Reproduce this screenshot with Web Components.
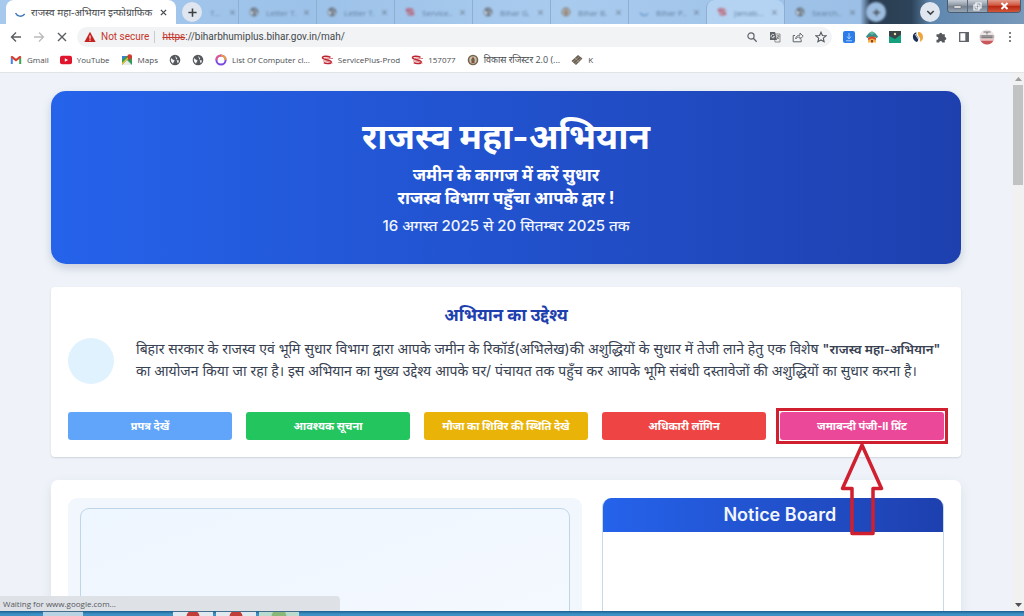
<!DOCTYPE html>
<html lang="hi">
<head>
<meta charset="utf-8">
<title>राजस्व महा-अभियान इन्फोग्राफिक</title>
<style>
html,body{margin:0;height:100%;overflow:hidden}
body{font-family:"Inter","Noto Sans Devanagari","Noto Sans",sans-serif}
browser-window{height:100vh}
purpose-card b{font-size:13px;font-weight:600}
</style>
</head>
<body>
<browser-window>
  <tab-strip slot="chrome"></tab-strip>
  <tool-bar slot="chrome"></tool-bar>
  <bookmarks-bar slot="chrome"></bookmarks-bar>
  <hero-banner>
    <span slot="title">राजस्व महा-अभियान</span>
    <span slot="line1">जमीन के कागज में करें सुधार</span>
    <span slot="line2">राजस्व विभाग पहुँचा आपके द्वार !</span>
    <span slot="date">16 अगस्त 2025 से 20 सितम्बर 2025 तक</span>
  </hero-banner>
  <purpose-card heading="अभियान का उद्देश्य">
    <span slot="text">बिहार सरकार के राजस्व एवं भूमि सुधार विभाग द्वारा आपके जमीन के रिकॉर्ड(अभिलेख)की अशुद्धियों के सुधार में तेजी लाने हेतु एक विशेष <b>"राजस्व महा-अभियान"</b> का आयोजन किया जा रहा है। इस अभियान का मुख्य उद्देश्य आपके घर/ पंचायत तक पहुँच कर आपके भूमि संबंधी दस्तावेजों की अशुद्धियों का सुधार करना है।</span>
    <action-button style="--bg:#60a5fa">प्रपत्र देखें</action-button>
    <action-button style="--bg:#22c55e">आवश्यक सूचना</action-button>
    <action-button style="--bg:#eab308">मौजा का शिविर की स्थिति देखे</action-button>
    <action-button style="--bg:#ef4444">अधिकारी लॉगिन</action-button>
    <action-button style="--bg:#ec4899" marked>जमाबन्दी पंजी-II प्रिंट</action-button>
  </purpose-card>
  <board-card><span slot="title">Notice Board</span></board-card>
  <span slot="status">Waiting for www.google.com...</span>
</browser-window>

<script>
function define(name, html, setup) {
  const tpl = document.createElement('template');
  tpl.innerHTML = html;
  customElements.define(name, class extends HTMLElement {
    constructor() {
      super();
      this.attachShadow({mode: 'open'}).append(tpl.content.cloneNode(true));
    }
    connectedCallback() { if (setup) setup(this, this.shadowRoot); }
  });
}
const UI = `font-family:"Open Sans","Noto Sans Devanagari","Noto Sans",sans-serif;`;
const BASE = `*{box-sizing:border-box}button{font:inherit;border:0;padding:0;margin:0;background:none;color:inherit;cursor:pointer}svg{display:block}`;

const ICONS = {
  back: ['0 0 12 12', '<path d="M11 6H2M6 1.5 1.5 6 6 10.5" fill="none" stroke="#5a5d61" stroke-width="1.4"/>'],
  forward: ['0 0 12 12', '<path d="M1 6h9M6 1.5 10.5 6 6 10.5" fill="none" stroke="#b9bbbe" stroke-width="1.3"/>'],
  stop: ['0 0 12 12', '<path d="m2 2 8 8M10 2 2 10" stroke="#5a5d61" stroke-width="1.4"/>'],
  warn: ['0 0 12 12', '<path d="M6 .8 11.6 11H.4z" fill="#c5221f"/><path d="M6 4.5v3.2M6 8.6v1.2" stroke="#fff" stroke-width="1.1"/>'],
  search: ['0 0 12 12', '<circle cx="5" cy="5" r="3.1" fill="none" stroke="#5f6368" stroke-width="1.2"/><path d="m7.3 7.3 3.4 3.4" stroke="#5f6368" stroke-width="1.3"/>'],
  translate: ['0 0 12 12', '<path d="M5 3h6v8H6z" fill="#eee" stroke="#777" stroke-width=".8"/><path d="M1 1h5l2 8H1z" fill="#5f6368"/><path d="M5.2 4A1.7 1.7 0 1 0 5.5 5.5H4" fill="none" stroke="#eee" stroke-width=".8"/><path d="M7.5 5h3M9 4v1M10 5 8.3 8M8 6l2 2" stroke="#666" stroke-width=".7" fill="none"/>'],
  share: ['0 0 12 12', '<path d="M3 4.5H1.2v6.3h8V8.5" fill="none" stroke="#5f6368"/><path d="M3.6 8C4 5.3 5.5 4.2 8 4.2V2l3.2 3.2L8 8.2V6C6 6 4.7 6.5 3.6 8z" fill="none" stroke="#5f6368" stroke-width=".9"/>'],
  star: ['0 0 12 12', '<path d="m6 1.2 1.4 3.3 3.6.3-2.7 2.4.8 3.5L6 8.9l-3.1 1.8.8-3.5L1 4.8l3.6-.3z" fill="none" stroke="#55585c" stroke-width="1.1"/>'],
  download: ['0 0 12 12', '<rect width="12" height="12" rx="2" fill="#2b7de9"/><path d="M6 2v5.5M4 5.5 6 8l2-2.5M3 9.8h6" fill="none" stroke="#a9ceff"/>'],
  house: ['0 0 12 12', '<path d="M0 5.5 3 2l3-1.5L9 2l3 3.5-1 1.5H1z" fill="#3a8f86"/><path d="m3 2 3 2 3-2-3-1.5z" fill="#62b5a5"/><path d="M2 6h8v5.5H2z" fill="#f0b44c"/><path d="m2 7 4-2 4 2v2L6 7.5 2 9z" fill="#d94a34"/><path d="M5 9h2v2.5H5z" fill="#9c3a2c"/>'],
  photo: ['0 0 12 12', '<path d="M0 0h12v12H0z" fill="#16a17e"/><path d="M0 0h12v3.5L6 8 0 5z" fill="#3a4447"/><circle cx="6" cy="3" r="1.2" fill="#eee4b0"/>'],
  swirl: ['0 0 12 12', '<path d="M4.5 1.2A5 5 0 0 0 1 7c.5 2 2 3.5 4 4 2-2 2-4 .5-5.5S4 2.5 4.5 1.2z" fill="#1e2f55"/><path d="M6 1c3 0 5 2 5 5s-1.500 4.200-3 5C8.500 8.500 8 7 7 5.500S5.500 2.500 6 1z" fill="#eea53a"/><path d="m3 3 4 6" stroke="#fff" stroke-width=".8"/>'],
  puzzle: ['0 0 12 12', '<path d="M1.5 3.2h2.7a1.5 1.5 0 1 1 3 0h2.6v2.7a1.5 1.5 0 1 1 0 3v2.6H7.2a1.5 1.5 0 1 0-3 0H1.5V8.7a1.5 1.5 0 1 0 0-2.9z" fill="#55585c"/>'],
  panel: ['0 0 12 12', '<path d="M1.7 1.7h8.6v8.6H1.7z" fill="#fff" stroke="#5f6368" stroke-width="1.3"/><path d="M7.3 1.7h3v8.6h-3z" fill="#5f6368"/>'],
  avatar: ['0 0 16 16', '<circle cx="8" cy="8" r="7.5" fill="#ece6e6"/><path d="M1.5 11.5h13A7.5 7.5 0 0 1 8 15.5a7.5 7.5 0 0 1-6.5-4z" fill="#c9585d"/><path d="M.8 6h14.4v3.5H.8z" fill="#bdb6b8"/><path d="M4.5 3h7M8 3v2.5M2.5 7h11M2.5 8.7h11" stroke="#6c6769" stroke-width=".9"/><path d="M1 10.8h14" stroke="#f2b8ba" stroke-width="1.2"/>'],
  dots: ['0 0 12 12', '<g fill="#5f6368"><circle cx="6" cy="2" r="1.1"/><circle cx="6" cy="6" r="1.1"/><circle cx="6" cy="10" r="1.1"/></g>'],
  gmail: ['0 0 12 12', '<path d="M.8 10V3.2l2 1.5V10z" fill="#4285f4"/><path d="M9.2 10V4.7l2-1.5V10z" fill="#34a853"/><path d="M.8 3.4C.8 2 2 1.6 2.8 2.2L6 4.7l3.2-2.5c.8-.6 2-.2 2 1.2L6 7.5z" fill="#d93a30"/>'],
  youtube: ['0 0 12 12', '<rect y="1.8" width="12" height="8.4" rx="2" fill="#e0142c"/><path d="m4.8 4.2 3.2 1.8-3.2 1.8z" fill="#fff"/>'],
  maps: ['0 0 12 12', '<path d="M1 2h10v9H1z" fill="#2f9e58"/><path d="m1 11 5-5 5 5z" fill="#e9eaec"/><path d="M1 2h4L1 6z" fill="#3f7de0"/><path d="M1 9 8 2h2L1 11z" fill="#f3c231"/><path d="M8.7.3a2.4 2.4 0 0 1 2.4 2.4c0 1.5-1.5 2.3-2.4 4-.9-1.7-2.4-2.5-2.4-4A2.4 2.4 0 0 1 8.7.3z" fill="#d4392e"/>'],
  globe: ['0 0 12 12', '<circle cx="6" cy="6" r="5.3" fill="#55585c"/><path d="M2 4.2c1.3 0 1.2 1.3 2.3 1.5S6 6.8 5 7.7 4.5 10 3.6 9.3C2 8 1.4 6 2 4.2zM6 1.8c1 .2.3 1.5 1.4 1.6S8.5 5 7.5 5.4s.7 1.2 1.7.9S10 8.5 8.7 9.3" fill="#f4f4f4"/>'],
  ring: ['0 0 12 12', '<circle cx="6" cy="6" r="4.6" fill="none" stroke="#7a4be0" stroke-width="2"/><path d="M1.4 6A4.6 4.6 0 0 1 6 1.4" fill="none" stroke="#e15a8e" stroke-width="2"/><path d="M6 1.4A4.6 4.6 0 0 1 10.6 6" fill="none" stroke="#ee9a3e" stroke-width="2"/>'],
  splus: ['0 0 12 12', '<path d="M9.5 3.2C6 1.8 1.5 2 1.5 3.8S9.8 5.7 10.2 7.8 5 10 2.8 8.7" fill="none" stroke="#bd2430" stroke-width="1.5"/><path d="M4 4.2c2-.5 5 .5 8 .3M2 7c3-.5 5 .5 9.5 2.2" fill="none" stroke="#d0525b" stroke-width=".8"/>'],
  emblem: ['0 0 12 12', '<circle cx="6" cy="6" r="5.3" fill="#77664f"/><circle cx="6" cy="6" r="3.7" fill="#c9c4ae"/><path d="M4.5 9V5L6 2.7 7.5 5v4z" fill="#8b4a3a"/><path d="M4 6h4" stroke="#5d7a5b"/>'],
  stack: ['0 0 12 12', '<path d="m.5 7 6.5-6 4.5 3.5-6.5 6.5z" fill="#665c51"/><path d="m2 8 6.5-5.5M4 9.5 10.5 4M4 4l4.5 4" stroke="#b5aa98" stroke-width=".7"/>'],
  spinner: ['0 0 12 12', '<path d="M1.5 7C3 10.5 8 11.5 10.7 8" fill="none" stroke="#3f78b8" stroke-width="1.4"/>'],
  close: ['0 0 12 12', '<path d="m2.5 2.5 7 7M9.5 2.5l-7 7" stroke="#45484c" stroke-width="1.7"/>'],
  plus: ['0 0 12 12', '<path d="M6 1.5v9M1.5 6h9" stroke="#3c4043" stroke-width="1.7"/>'],
  chevron: ['0 0 12 12', '<path d="m2.5 4.3 3.5 3.5 3.5-3.5" fill="none" stroke="#3c4043" stroke-width="1.7"/>']
};
class UiIcon extends HTMLElement {
  static observedAttributes = ['name'];
  constructor() {
    super();
    this.attachShadow({mode: 'open'}).innerHTML = `<style>:host{display:block;flex:none;width:var(--size,12px);height:var(--size,12px)}svg{display:block;width:100%;height:100%}</style><svg aria-hidden="true"></svg>`;
  }
  attributeChangedCallback(attr, old, name) {
    const icon = ICONS[name];
    if (!icon) return;
    const svg = this.shadowRoot.querySelector('svg');
    svg.setAttribute('viewBox', icon[0]);
    svg.innerHTML = icon[1];
  }
}
customElements.define('ui-icon', UiIcon);

define('background-tab', `<style>${BASE}
:host{flex:1 1 0;min-width:0;max-width:78px;display:flex;align-items:center;height:24px;padding:0 6px 0 10px;gap:7px;border-left:1px solid #8fafd2;color:#4c6583;font-size:8px;white-space:nowrap}
:host([lit]){background:#b4d3f3;border-radius:8px 8px 0 0}
span,ui-icon{filter:blur(1px);opacity:.75}
span{flex:1;overflow:hidden}
</style><ui-icon id="icon" style="--size:10px"></ui-icon><span><slot></slot></span><ui-icon name="close" style="--size:7px"></ui-icon>`,
  (el, root) => root.querySelector('#icon').setAttribute('name', el.getAttribute('icon')));

define('tab-strip', `<style>${BASE}
:host{${UI}display:flex;align-items:center;height:24px;padding:0 3px 0 6px;background:linear-gradient(90deg,#a6c9ed 0,#9dc2e9 30%,#a9cbee 55%,#9bbfe6 84%,#2b3d52 85%,#2d4359 89%,#5f87ae 91%,#7899ba 100%)}
.active{display:flex;align-items:center;width:170px;height:24px;padding:0 8px;background:#fff;border-radius:8px 8px 0 0;font-size:10px;line-height:16px;color:#45484c;gap:5px}
.active span{flex:1;white-space:nowrap}
.round{display:grid;place-items:center;width:20px;height:20px;border-radius:50%;background:#dfe6ef;flex:none}
.new{margin:0 0 0 6px}
.tabs{flex:0 1 660px;min-width:0;display:flex;height:24px}
.stub{flex:0 0 36px;display:flex;align-items:center;gap:8px;padding-left:8px;color:#4c6583;font-size:8px;filter:blur(1px);opacity:.7}
.ghost{background:#9dbde0;filter:blur(1px);margin-left:4px}
.space{flex:1}
.win{display:flex;align-self:flex-start;height:13px;margin-left:7px;border:1px solid #4b5c70;border-top:0;border-radius:0 0 4px 4px;overflow:hidden;flex:none}
.win button{width:20px;height:12px;display:grid;place-items:center;background:linear-gradient(#c7ced6,#8d98a5 45%,#747f8d 50%,#96a5b4);border-right:1px solid #5b6877}
.win button:last-child{width:32px;border:0;background:linear-gradient(#e39c8c,#cf553e 45%,#b8240f 50%,#d2563a)}
</style>
<div class="active"><ui-icon name="spinner"></ui-icon><span>राजस्व महा-अभियान इन्फोग्राफिक</span><button aria-label="Close tab"><ui-icon name="close" style="--size:9px"></ui-icon></button></div>
<button class="round new" aria-label="New tab"><ui-icon name="plus" style="--size:11px"></ui-icon></button>
<div class="tabs"><div class="stub">T...<ui-icon name="close" style="--size:7px"></ui-icon></div>
<background-tab icon="globe">Letter T...</background-tab><background-tab icon="globe">Letter T...</background-tab><background-tab icon="splus">Service...</background-tab><background-tab icon="globe">Bihar G...</background-tab><background-tab icon="emblem">Bihar B...</background-tab><background-tab icon="spinner">Bihar P...</background-tab><background-tab icon="splus" lit>Jamab...</background-tab><background-tab icon="globe">Search...</background-tab></div>
<div class="round ghost"><ui-icon name="plus" style="--size:9px"></ui-icon></div>
<div class="space"></div>
<button class="round" aria-label="Search tabs"><ui-icon name="chevron" style="--size:11px"></ui-icon></button>
<div class="win"><button aria-label="Minimize"><svg width="9" height="8"><path d="M1 4h7v2H1z" fill="#fff" stroke="#555" stroke-width=".5"/></svg></button><button aria-label="Restore"><svg width="9" height="9"><path d="M3 1h5v5H3zM1 3h5v5H1z" fill="#7b8794" stroke="#fff" stroke-width="1.2"/></svg></button><button aria-label="Close"><svg width="9" height="8"><path d="m1.5 1 6 6M7.5 1l-6 6" stroke="#fff" stroke-width="2"/></svg></button></div>`);

define('tool-bar', `<style>${BASE}
:host{font-family:"Roboto","Noto Sans",sans-serif;display:flex;align-items:center;height:26px;padding:0 3px 0 4px;background:#fff;font-size:10px;color:#5f6368}
.b{display:grid;place-items:center;width:23px;height:23px;flex:none}
.field{flex:1;display:flex;align-items:center;height:20px;margin:0 5px 0 4px;padding:0 0 0 7px;border-radius:10px;background:#f1f3f4}
label{color:#c5372c;margin-left:5px;padding-right:5px;border-right:1px solid #c9cbce;line-height:12px;white-space:nowrap}
s{color:#c5372c;margin-left:7px;line-height:12px}
input{flex:1;min-width:0;border:0;padding:0;background:none;font:inherit;line-height:12px;color:#44474b;outline:0}
</style>
<button class="b" aria-label="Back"><ui-icon name="back"></ui-icon></button><button class="b" aria-label="Forward"><ui-icon name="forward"></ui-icon></button><button class="b" aria-label="Stop"><ui-icon name="stop"></ui-icon></button>
<div class="field"><ui-icon name="warn"></ui-icon><label for="url">Not secure</label><s>https</s><input id="url" value="://biharbhumiplus.bihar.gov.in/mah/">
<button class="b" aria-label="Zoom"><ui-icon name="search"></ui-icon></button><button class="b" aria-label="Translate"><ui-icon name="translate"></ui-icon></button><button class="b" aria-label="Share"><ui-icon name="share"></ui-icon></button><button class="b" aria-label="Bookmark"><ui-icon name="star"></ui-icon></button></div>
<button class="b" aria-label="Downloader"><ui-icon name="download"></ui-icon></button><button class="b" aria-label="Home extension"><ui-icon name="house"></ui-icon></button><button class="b" aria-label="Photo extension"><ui-icon name="photo"></ui-icon></button><button class="b" aria-label="Swirl extension"><ui-icon name="swirl"></ui-icon></button><button class="b" aria-label="Extensions"><ui-icon name="puzzle"></ui-icon></button><button class="b" aria-label="Side panel"><ui-icon name="panel"></ui-icon></button><button class="b" aria-label="Profile"><ui-icon name="avatar" style="--size:16px"></ui-icon></button><button class="b" aria-label="Menu"><ui-icon name="dots"></ui-icon></button>`);

define('bookmark-link', `<style>${BASE}
:host{display:block}a{display:flex;align-items:center;gap:5px;color:inherit;text-decoration:none;white-space:nowrap}
</style><a href="#"><ui-icon style="--size:12px"></ui-icon><slot></slot></a>`,
  (el, root) => root.querySelector('ui-icon').setAttribute('name', el.getAttribute('icon')));
define('bookmarks-bar', `<style>
:host{${UI}display:flex;align-items:center;height:23px;padding:0 10px 3px;gap:11px;background:#fff;border-bottom:1px solid #e2e4e8;font-size:8px;line-height:12px;color:#4a4d51;box-sizing:border-box}
:lang(hi).hindi{font-size:9px}
</style>
<bookmark-link icon="gmail">Gmail</bookmark-link><bookmark-link icon="youtube">YouTube</bookmark-link><bookmark-link icon="maps">Maps</bookmark-link><bookmark-link icon="globe"></bookmark-link><bookmark-link icon="globe"></bookmark-link><bookmark-link icon="ring">List Of Computer cl...</bookmark-link><bookmark-link icon="splus">ServicePlus-Prod</bookmark-link><bookmark-link icon="splus">157077</bookmark-link><bookmark-link class="hindi" lang="hi" icon="emblem">विकास रजिस्टर 2.0 (...</bookmark-link><bookmark-link icon="stack">K</bookmark-link>`);

define('hero-banner', `<style>
:host{display:block;padding:21px 24px 27px;border-radius:15px;background:linear-gradient(90deg,#2563eb,#1e40af);box-shadow:0 4px 10px #1e2f5530;color:#fff;text-align:center}
h1{margin:0 0 4px;font-size:35px;line-height:48px;font-weight:700}
p{margin:0;font-size:17px;line-height:23px;font-weight:700}
.date{margin-top:4px;font-size:15px;line-height:23px;font-weight:500;color:#f1f5ff}
</style><h1><slot name="title"></slot></h1><p><slot name="line1"></slot></p><p><slot name="line2"></slot></p><p class="date"><slot name="date"></slot></p>`);

define('purpose-card', `<style>
:host{display:block;padding:16px 17px 17px;border-radius:4px;background:#fff;box-shadow:0 1px 2px #1e2f5528}
h2{margin:0;font-size:17px;line-height:24px;font-weight:700;color:#1e40af;text-align:center}
.row{display:flex;align-items:flex-start;gap:22px;margin:11px 0 28px}
.dot{flex:none;width:46px;height:46px;border-radius:50%;background:#e0f2fe}
p{margin:0;font-size:14px;line-height:21px;color:#374151}
nav{display:grid;grid-template-columns:repeat(5,1fr);gap:14px}
</style><h2></h2><div class="row"><div class="dot"></div><p><slot name="text"></slot></p></div><nav><slot></slot></nav>`,
  (el, root) => { root.querySelector('h2').textContent = el.getAttribute('heading'); });

define('action-button', `<style>${BASE}
:host{display:block;position:relative}
button{display:block;width:100%;height:28px;border-radius:3px;background:var(--bg);color:#fff;font-size:11px;line-height:28px;font-weight:700;white-space:nowrap}
.mark{display:none}
:host([marked]) .mark{display:block;position:absolute;inset:-4px;border:3px solid #d01f2e;pointer-events:none}
.mark svg{position:absolute;top:100%;left:calc(50% - 22px)}
</style><button type="button"><slot></slot></button><div class="mark"><svg width="44" height="96" viewBox="0 0 44 96"><path d="M22 4 41.500 47.500H33v45H12v-45H2.500z" fill="none" stroke="#d01f2e" stroke-width="3.500" stroke-linejoin="round"/></svg></div>`);

define('board-card', `<style>
:host{display:grid;grid-template-columns:3fr 2fr;gap:20px;height:340px;padding:18px 17px;box-sizing:border-box;border-radius:7px;background:#fff;box-shadow:0 4px 12px #1e2f5518}
.slide{padding:10px 12px;border-radius:9px;background:#f2f7fd;display:grid}
.inner{border:1px solid #bfd6ea;border-radius:9px;background:linear-gradient(160deg,#eef6ff,#f8faff)}
.notice{border:1px solid #c7d8e6;border-top:0;border-radius:9px;overflow:hidden}
h2{margin:0;height:34px;padding-left:14px;background:linear-gradient(90deg,#2563eb,#1e40af);color:#f3f6ff;font-size:18px;line-height:34px;font-weight:600;text-align:center}
</style><div class="slide"><div class="inner"></div></div><section class="notice"><h2><slot name="title"></slot></h2></section>`);

define('browser-window', `<style>${BASE}
:host{display:flex;flex-direction:column;background:#fff}
.view{flex:1;min-height:0;display:flex;position:relative;background:#eff3f9}
main{flex:1;min-width:0;overflow:hidden;padding:18px 51px 0;display:flex;flex-direction:column;gap:23px}
::slotted(*){flex:none}
.bar{width:12px;flex:none;display:flex;flex-direction:column;align-items:center;background:#f1f1f2}
.arrow{height:12px;display:grid;place-items:center}
.thumb{width:10px;height:100px;background:#c1c2c3}
.fill{flex:1}
.status{position:absolute;left:0;bottom:0;width:340px;height:15px;padding:0 3px;border-radius:0 4px 0 0;background:#dee1e6;color:#55585d;${UI}font-size:8px;line-height:15px}
footer{flex:none;height:5px;display:flex;gap:3px;padding-left:43px;background:linear-gradient(#1b5d8f,#3d91c4 60%);overflow:hidden}
footer i{display:block;width:40px;height:5px;background:#b7d3e4;border-top:1px solid #456c88}
footer .c{background:radial-gradient(circle at 50% 120%,#c23c38 0 6px,#dfe9ef 7px)}
footer .g{background:radial-gradient(circle at 50% 120%,#8ab878 0 7px,#b9dccf 8px)}
footer .gap{width:84px;background:none;border:0}
</style>
<slot name="chrome"></slot>
<div class="view"><main><slot></slot></main>
<div class="bar"><div class="arrow"><svg width="7" height="4"><path d="M0 4 3.5 0 7 4z" fill="#9b9da0"/></svg></div><div class="thumb"></div><div class="fill"></div><div class="arrow"><svg width="7" height="4"><path d="M0 0h7L3.5 4z" fill="#505356"/></svg></div></div>
<div class="status"><slot name="status"></slot></div></div>
<footer><i></i><i class="gap"></i><i class="c"></i><i class="c"></i><i class="g"></i></footer>`);
</script>
</body>
</html>
